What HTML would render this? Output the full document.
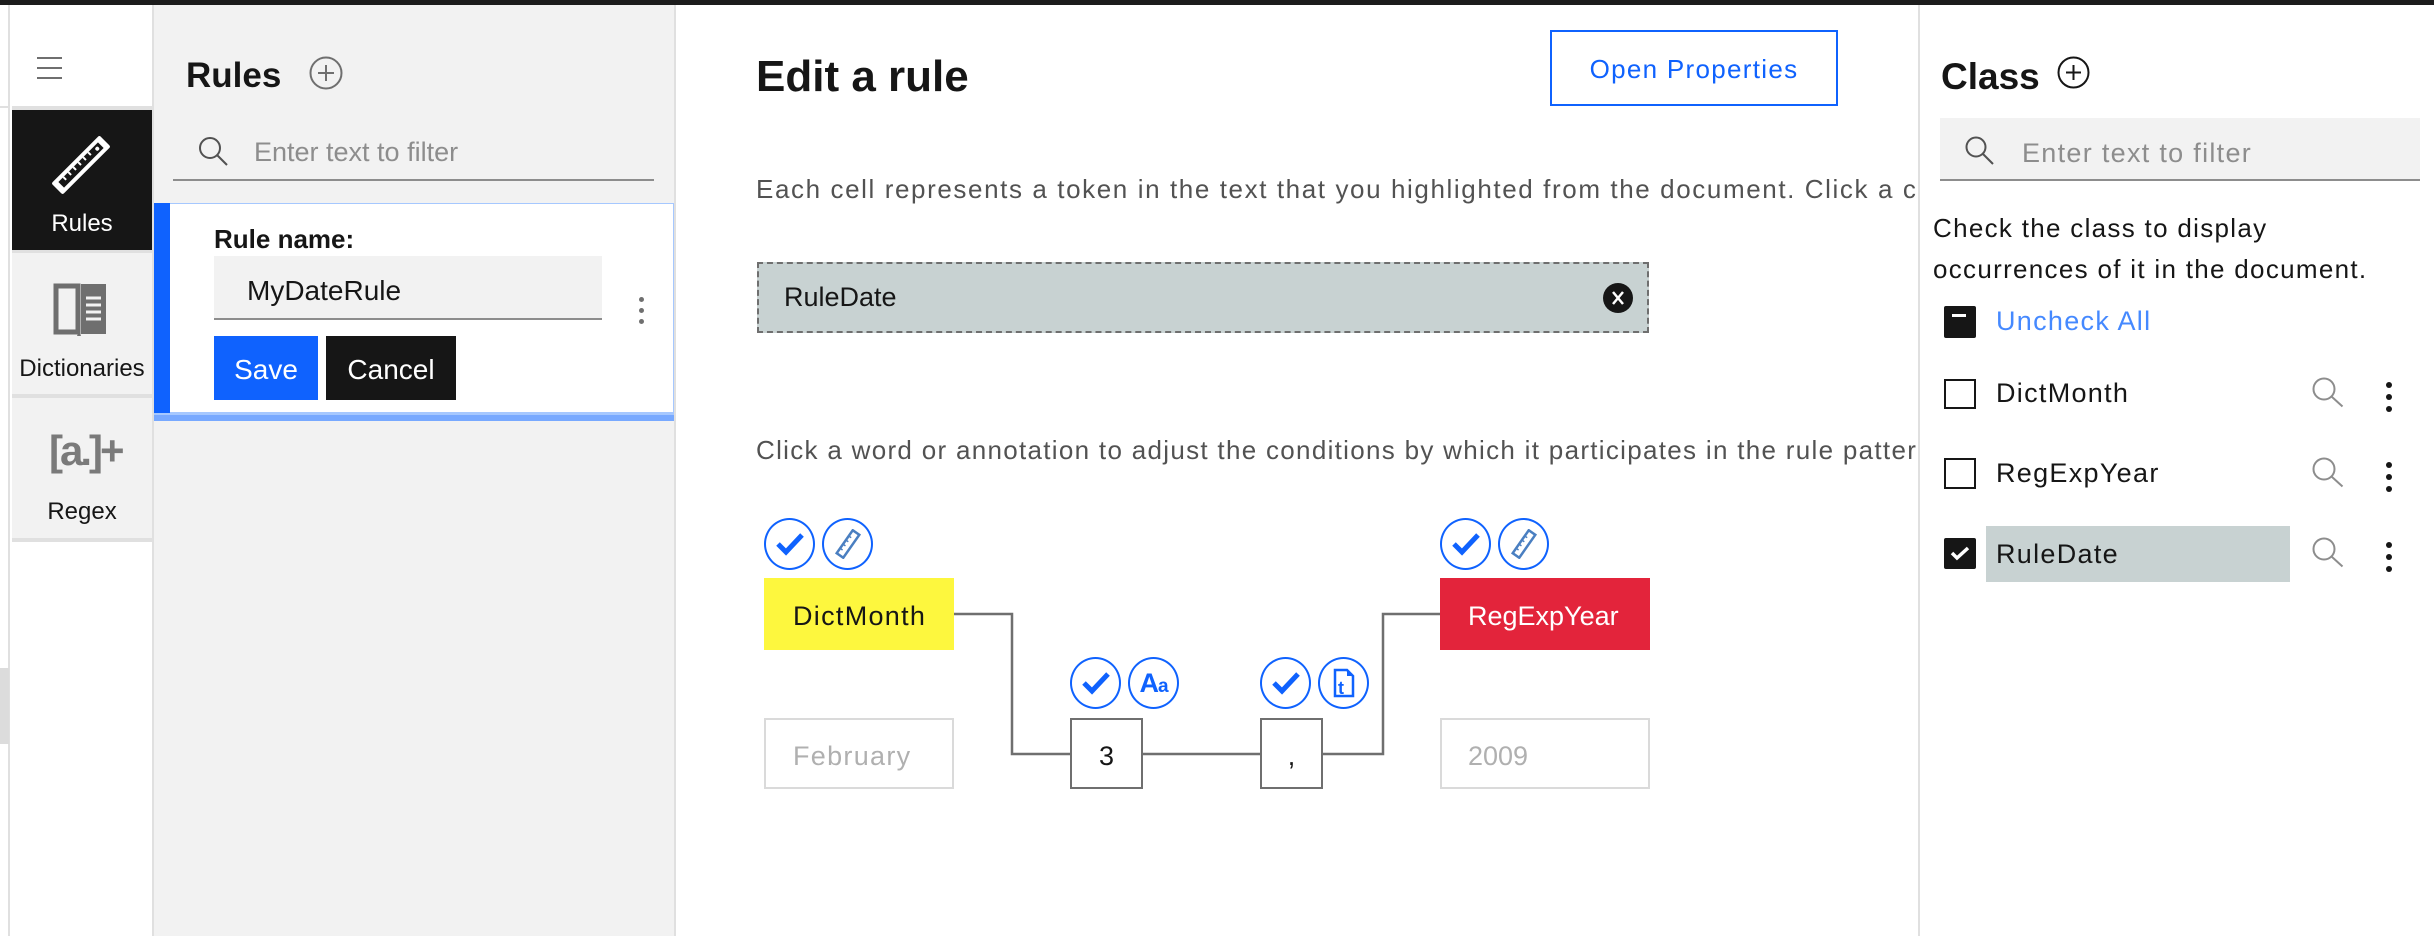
<!DOCTYPE html>
<html><head><meta charset="utf-8"><style>
*{margin:0;padding:0;box-sizing:border-box}
body{width:2434px;height:936px;position:relative;overflow:hidden;background:#fff;font-family:"Liberation Sans",sans-serif;color:#161616}
.a{position:absolute}
.t{position:absolute;white-space:nowrap;line-height:1}
.circ{position:absolute;width:51px;height:52px;border:2px solid #0f62fe;border-radius:50%;display:flex;align-items:center;justify-content:center}
.r{letter-spacing:1.3px}
</style></head><body>
<div class="a" style="left:0;top:0;width:2434px;height:5px;background:#1c1c1c"></div>
<!-- left rail -->
<div class="a" style="left:8px;top:5px;width:2px;height:931px;background:#e0e0e0"></div>
<div class="a" style="left:0;top:106px;width:9px;height:2px;background:#e0e0e0"></div>
<div class="a" style="left:0;top:668px;width:9px;height:76px;background:#dcdcdc"></div>
<div class="a" style="left:152px;top:5px;width:2px;height:931px;background:#e0e0e0"></div>
<div class="a" style="left:37px;top:57px;width:25px;height:2px;background:#6f6f6f"></div>
<div class="a" style="left:37px;top:67px;width:25px;height:2px;background:#6f6f6f"></div>
<div class="a" style="left:37px;top:77px;width:25px;height:2px;background:#6f6f6f"></div>
<div class="a" style="left:12px;top:106px;width:140px;height:4px;background:#e0e0e0"></div>
<div class="a" style="left:12px;top:110px;width:140px;height:140px;background:#161616"></div>
<svg class="a" style="left:50px;top:134px" width="62" height="62" viewBox="0 0 62 62"><g transform="rotate(-45 31 31)"><rect x="-3" y="23" width="68" height="16" rx="2" fill="#fff"/><rect x="3" y="27" width="56" height="8" fill="#161616"/><g stroke="#fff" stroke-width="2"><line x1="10" y1="27" x2="10" y2="31"/><line x1="17" y1="27" x2="17" y2="31"/><line x1="24" y1="27" x2="24" y2="31"/><line x1="31" y1="27" x2="31" y2="31"/><line x1="38" y1="27" x2="38" y2="31"/><line x1="45" y1="27" x2="45" y2="31"/></g><circle cx="54" cy="31" r="2" fill="#fff"/></g></svg>
<div class="t" style="left:12px;width:140px;text-align:center;top:212px;font-size:24px;color:#fff">Rules</div>
<div class="a" style="left:12px;top:250px;width:140px;height:3px;background:#e0e0e0"></div>
<div class="a" style="left:12px;top:253px;width:140px;height:141px;background:#f2f2f2"></div>
<svg class="a" style="left:53px;top:283px" width="54" height="54" viewBox="0 0 54 54"><path d="M3 3h22v46H3z" fill="none" stroke="#6f6f6f" stroke-width="5"/><rect x="28" y="1" width="25" height="50" fill="#6f6f6f"/><path d="M26 48l2 5h-4z" fill="#6f6f6f"/><g stroke="#f2f2f2" stroke-width="3"><line x1="33" y1="15" x2="48" y2="15"/><line x1="33" y1="22" x2="48" y2="22"/><line x1="33" y1="29" x2="48" y2="29"/><line x1="33" y1="36" x2="48" y2="36"/></g></svg>
<div class="t" style="left:12px;width:140px;text-align:center;top:357px;font-size:24px">Dictionaries</div>
<div class="a" style="left:12px;top:394px;width:140px;height:4px;background:#e0e0e0"></div>
<div class="a" style="left:12px;top:398px;width:140px;height:140px;background:#f2f2f2"></div>
<div class="t" style="left:49px;top:430px;font-size:42px;font-weight:bold;color:#7a7a7a;letter-spacing:-3px">[a.]+</div>
<div class="t" style="left:12px;width:140px;text-align:center;top:500px;font-size:24px">Regex</div>
<div class="a" style="left:12px;top:538px;width:140px;height:4px;background:#e0e0e0"></div>
<!-- rules panel -->
<div class="a" style="left:154px;top:5px;width:520px;height:931px;background:#f2f2f2"></div>
<div class="a" style="left:674px;top:5px;width:2px;height:931px;background:#e0e0e0"></div>
<div class="t" style="left:186px;top:58px;font-size:35px;font-weight:bold">Rules</div>
<svg class="a" style="left:309px;top:56px" width="34" height="34" viewBox="0 0 34 34"><circle cx="17" cy="17" r="15.5" fill="none" stroke="#6f6f6f" stroke-width="2"/><path d="M17 9v16M9 17h16" stroke="#6f6f6f" stroke-width="2"/></svg>
<svg class="a" style="left:198px;top:136px" width="32" height="30" viewBox="0 0 32 30"><circle cx="12" cy="12" r="10" fill="none" stroke="#525252" stroke-width="2"/><path d="M19 19l10 10" stroke="#525252" stroke-width="2"/></svg>
<div class="t" style="left:254px;top:139px;font-size:27px;color:#8d8d8d">Enter text to filter</div>
<div class="a" style="left:173px;top:179px;width:481px;height:2px;background:#8d8d8d"></div>
<div class="a" style="left:154px;top:203px;width:520px;height:210px;background:#fff;border:1px solid #a6c8ff"></div>
<div class="a" style="left:154px;top:203px;width:16px;height:210px;background:#0f62fe"></div>
<div class="a" style="left:154px;top:413px;width:520px;height:8px;background:#78a9ff;border-top:2px solid #a6c8ff"></div>
<div class="t" style="left:214px;top:226px;font-size:26px;font-weight:bold;color:#161616">Rule name:</div>
<div class="a" style="left:214px;top:256px;width:388px;height:64px;background:#f2f2f2;border-bottom:2px solid #8d8d8d"></div>
<div class="t" style="left:247px;top:277px;font-size:28px">MyDateRule</div>
<div class="a" style="left:639px;top:297px;width:5px;height:5px;border-radius:50%;background:#6f6f6f;box-shadow:0 11px 0 #6f6f6f,0 22px 0 #6f6f6f"></div>
<div class="a" style="left:214px;top:336px;width:104px;height:64px;background:#0f62fe"></div>
<div class="t" style="left:214px;width:104px;text-align:center;top:356px;font-size:28px;color:#fff">Save</div>
<div class="a" style="left:326px;top:336px;width:130px;height:64px;background:#161616"></div>
<div class="t" style="left:326px;width:130px;text-align:center;top:356px;font-size:28px;color:#fff">Cancel</div>
<!-- main -->
<div class="t" style="left:756px;top:55px;font-size:44px;font-weight:bold">Edit a rule</div>
<div class="a" style="left:1550px;top:30px;width:288px;height:76px;border:2px solid #0f62fe"></div>
<div class="t r" style="left:1550px;width:288px;text-align:center;top:56px;font-size:26px;color:#0f62fe">Open Properties</div>
<div class="a" style="left:756px;top:170px;width:1162px;height:40px;overflow:hidden"><div class="t" style="left:0;top:6px;font-size:26px;color:#525252;letter-spacing:1.6px">Each cell represents a token in the text that you highlighted from the document. Click a cell to edit</div></div>
<div class="a" style="left:757px;top:262px;width:892px;height:71px;background:#c8d2d2;border:2px dashed #6f6f6f"></div>
<div class="t" style="left:784px;top:284px;font-size:27px">RuleDate</div>
<svg class="a" style="left:1602px;top:282px" width="32" height="32" viewBox="0 0 32 32"><circle cx="16" cy="16" r="15" fill="#161616"/><path d="M11 10l10 12M21 10l-10 12" stroke="#fff" stroke-width="2.5"/></svg>
<div class="a" style="left:756px;top:433px;width:1162px;height:40px;overflow:hidden"><div class="t" style="left:0;top:4px;font-size:26px;color:#525252;letter-spacing:1.3px">Click a word or annotation to adjust the conditions by which it participates in the rule pattern.</div></div>
<!-- connectors -->
<svg class="a" style="left:0;top:0" width="2434" height="936"><path d="M954 614H1012V754H1070M1143 754H1260M1323 754H1383V614H1440" fill="none" stroke="#6f6f6f" stroke-width="2.5"/></svg>
<!-- circles -->
<div class="circ" style="left:764px;top:518px"><svg width="30" height="24" viewBox="0 0 30 24"><path d="M3 12l8 8L27 3" fill="none" stroke="#0f62fe" stroke-width="5"/></svg></div>
<div class="circ" style="left:822px;top:518px"><svg width="30" height="30" viewBox="0 0 30 30"><g transform="rotate(-55 15 15)"><rect x="1" y="11" width="28" height="8" fill="none" stroke="#4a7fc1" stroke-width="2.5"/><path d="M7 11v3M12 11v3M17 11v3M22 11v3" stroke="#4a7fc1" stroke-width="1.5"/></g></svg></div>
<div class="circ" style="left:1440px;top:518px"><svg width="30" height="24" viewBox="0 0 30 24"><path d="M3 12l8 8L27 3" fill="none" stroke="#0f62fe" stroke-width="5"/></svg></div>
<div class="circ" style="left:1498px;top:518px"><svg width="30" height="30" viewBox="0 0 30 30"><g transform="rotate(-55 15 15)"><rect x="1" y="11" width="28" height="8" fill="none" stroke="#4a7fc1" stroke-width="2.5"/><path d="M7 11v3M12 11v3M17 11v3M22 11v3" stroke="#4a7fc1" stroke-width="1.5"/></g></svg></div>
<div class="circ" style="left:1070px;top:657px"><svg width="30" height="24" viewBox="0 0 30 24"><path d="M3 12l8 8L27 3" fill="none" stroke="#0f62fe" stroke-width="5"/></svg></div>
<div class="circ" style="left:1128px;top:657px"><span style="font-weight:bold;color:#0f62fe;font-size:27px;letter-spacing:-1px">A<span style="font-size:19px">a</span></span></div>
<div class="circ" style="left:1260px;top:657px"><svg width="30" height="24" viewBox="0 0 30 24"><path d="M3 12l8 8L27 3" fill="none" stroke="#0f62fe" stroke-width="5"/></svg></div>
<div class="circ" style="left:1318px;top:657px"><svg width="22" height="30" viewBox="0 0 22 30"><path d="M2 2h12l6 6v20H2z" fill="none" stroke="#0f62fe" stroke-width="2.5"/><path d="M14 2v6h6z" fill="#0f62fe"/><text x="5" y="26" font-family="Liberation Sans" font-weight="bold" font-size="18" fill="#0f62fe">t</text></svg></div>
<!-- tokens -->
<div class="a" style="left:764px;top:578px;width:190px;height:72px;background:#fdf73e"></div>
<div class="t r" style="left:793px;top:603px;font-size:27px">DictMonth</div>
<div class="a" style="left:1440px;top:578px;width:210px;height:72px;background:#e3243b"></div>
<div class="t" style="left:1468px;top:603px;font-size:27px;color:#fff">RegExpYear</div>
<div class="a" style="left:764px;top:718px;width:190px;height:71px;border:2px solid #dadada"></div>
<div class="t r" style="left:793px;top:743px;font-size:27px;color:#b0b0b0">February</div>
<div class="a" style="left:1070px;top:718px;width:73px;height:71px;border:2px solid #6f6f6f"></div>
<div class="t" style="left:1070px;width:73px;text-align:center;top:743px;font-size:27px">3</div>
<div class="a" style="left:1260px;top:718px;width:63px;height:71px;border:2px solid #6f6f6f"></div>
<div class="t" style="left:1260px;width:63px;text-align:center;top:743px;font-size:27px">,</div>
<div class="a" style="left:1440px;top:718px;width:210px;height:71px;border:2px solid #dadada"></div>
<div class="t" style="left:1468px;top:743px;font-size:27px;color:#b0b0b0">2009</div>
<!-- right panel -->
<div class="a" style="left:1918px;top:5px;width:2px;height:931px;background:#e0e0e0"></div>
<div class="t" style="left:1941px;top:58px;font-size:37px;font-weight:bold">Class</div>
<svg class="a" style="left:2057px;top:56px" width="33" height="33" viewBox="0 0 33 33"><circle cx="16.5" cy="16.5" r="15" fill="none" stroke="#161616" stroke-width="2"/><path d="M16.5 9v15M9 16.5h15" stroke="#161616" stroke-width="2"/></svg>
<div class="a" style="left:1940px;top:118px;width:480px;height:63px;background:#f2f2f2;border-bottom:2px solid #8d8d8d"></div>
<svg class="a" style="left:1965px;top:136px" width="30" height="30" viewBox="0 0 30 30"><circle cx="11" cy="11" r="9.5" fill="none" stroke="#525252" stroke-width="2"/><path d="M18 18l10 10" stroke="#525252" stroke-width="2"/></svg>
<div class="t r" style="left:2022px;top:140px;font-size:27px;color:#8d8d8d">Enter text to filter</div>
<div class="t r" style="left:1933px;top:215px;font-size:26px;color:#161616">Check the class to display</div>
<div class="t r" style="left:1933px;top:256px;font-size:26px;color:#161616">occurrences of it in the document.</div>
<div class="a" style="left:1944px;top:306px;width:32px;height:32px;background:#161616;border-radius:2px"></div>
<div class="a" style="left:1952px;top:314px;width:14px;height:3px;background:#fff"></div>
<div class="t r" style="left:1996px;top:308px;font-size:27px;color:#4589ff">Uncheck All</div>
<div class="a" style="left:1944px;top:379px;width:32px;height:30px;border:2px solid #161616"></div>
<div class="t r" style="left:1996px;top:380px;font-size:27px">DictMonth</div>
<div class="a" style="left:1944px;top:458px;width:32px;height:31px;border:2px solid #161616"></div>
<div class="t r" style="left:1996px;top:460px;font-size:27px">RegExpYear</div>
<div class="a" style="left:1986px;top:526px;width:304px;height:56px;background:#c8d2d2"></div>
<div class="a" style="left:1944px;top:538px;width:32px;height:31px;background:#161616;border-radius:2px"></div>
<svg class="a" style="left:1948px;top:543px" width="24" height="20" viewBox="0 0 24 20"><path d="M4 10l5 5L20 5" fill="none" stroke="#fff" stroke-width="3.5"/></svg>
<div class="t r" style="left:1996px;top:541px;font-size:27px">RuleDate</div>
<svg class="a" style="left:2312px;top:377px" width="32" height="32" viewBox="0 0 32 32"><circle cx="12" cy="12" r="10.5" fill="none" stroke="#8d8d8d" stroke-width="2"/><path d="M19.5 19.5l11 10" stroke="#8d8d8d" stroke-width="2"/></svg>
<svg class="a" style="left:2312px;top:457px" width="32" height="32" viewBox="0 0 32 32"><circle cx="12" cy="12" r="10.5" fill="none" stroke="#8d8d8d" stroke-width="2"/><path d="M19.5 19.5l11 10" stroke="#8d8d8d" stroke-width="2"/></svg>
<svg class="a" style="left:2312px;top:537px" width="32" height="32" viewBox="0 0 32 32"><circle cx="12" cy="12" r="10.5" fill="none" stroke="#8d8d8d" stroke-width="2"/><path d="M19.5 19.5l11 10" stroke="#8d8d8d" stroke-width="2"/></svg>
<div class="a" style="left:2386px;top:382px;width:6px;height:6px;border-radius:50%;background:#161616;box-shadow:0 12px 0 #161616,0 24px 0 #161616"></div>
<div class="a" style="left:2386px;top:462px;width:6px;height:6px;border-radius:50%;background:#161616;box-shadow:0 12px 0 #161616,0 24px 0 #161616"></div>
<div class="a" style="left:2386px;top:542px;width:6px;height:6px;border-radius:50%;background:#161616;box-shadow:0 12px 0 #161616,0 24px 0 #161616"></div>
</body></html>
